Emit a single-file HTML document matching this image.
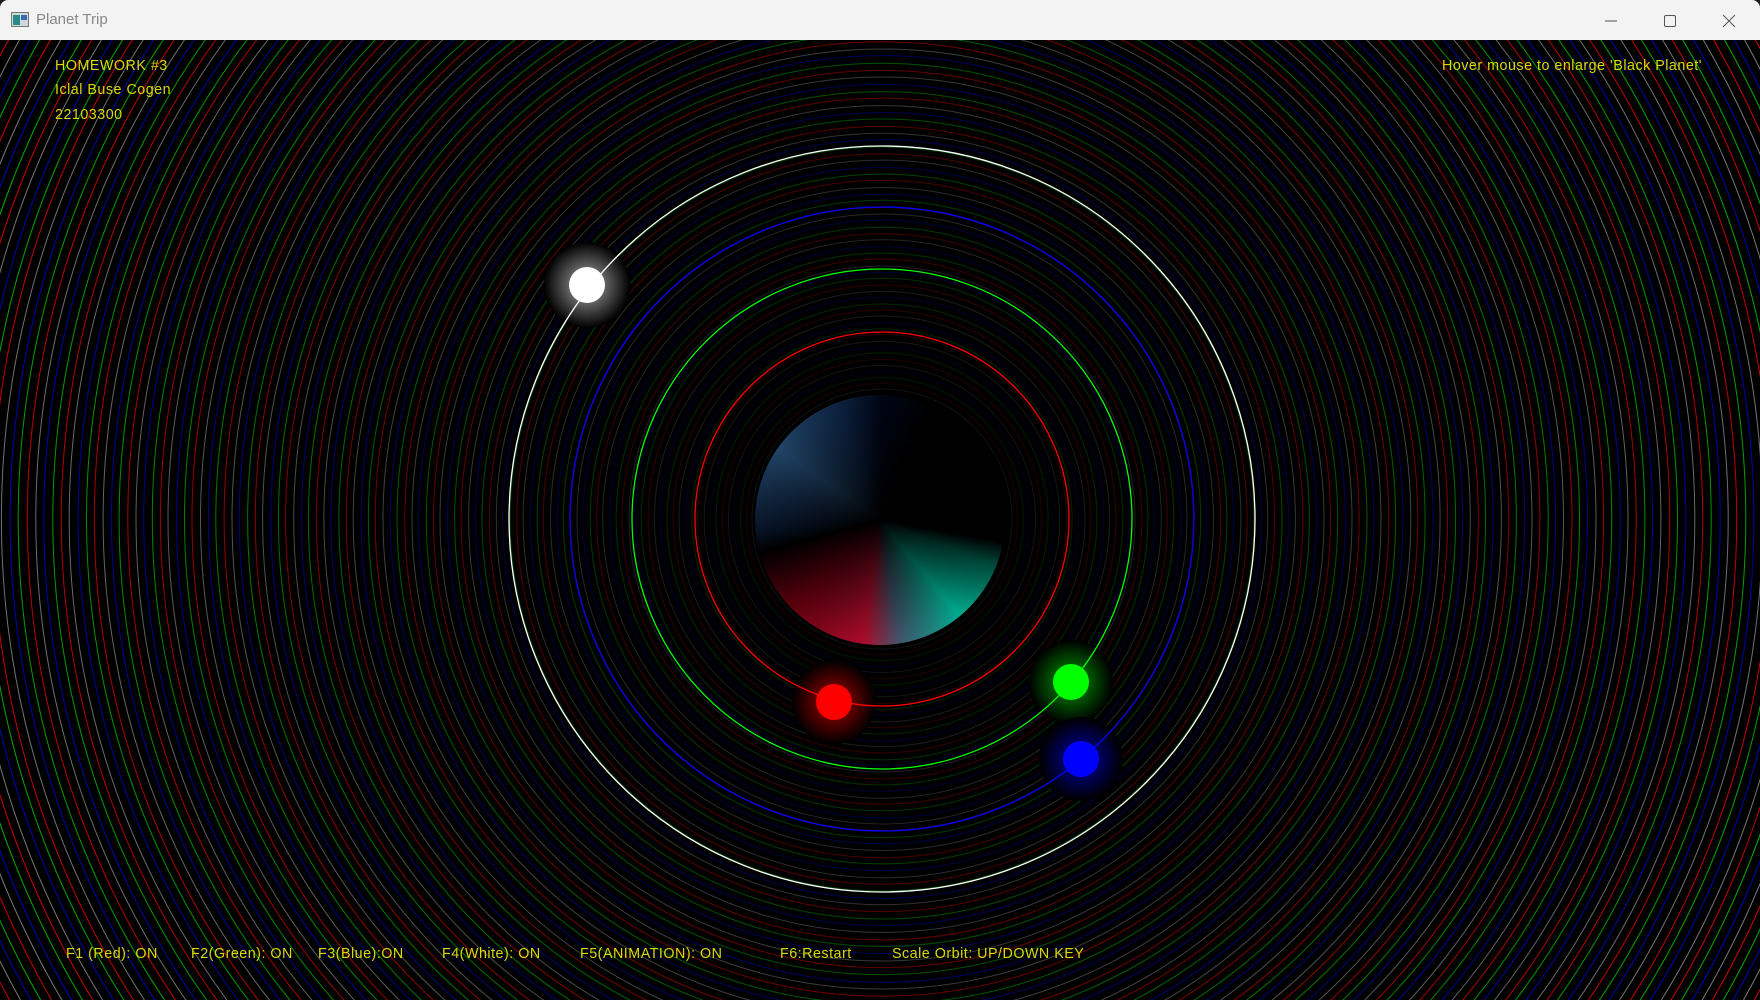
<!DOCTYPE html>
<html><head><meta charset="utf-8"><style>
html,body{margin:0;padding:0;width:1760px;height:1000px;overflow:hidden;background:#1a1a1a;font-family:"Liberation Sans",Arial,sans-serif}
#title{position:absolute;left:0;top:0;width:1760px;height:40px;background:#f3f3f3;border-radius:8px 8px 0 0;overflow:hidden}
#title .t{position:absolute;left:36px;top:11px;font-size:15px;color:#888}
#scene{position:absolute;left:0;top:40px;width:1760px;height:960px;background:#000;overflow:hidden}
svg{display:block}
.y{position:absolute;color:#dada00;font-size:14.3px;letter-spacing:0.5px;white-space:nowrap;line-height:16px}
#planet{position:absolute;left:755px;top:355px;width:250px;height:250px;border-radius:50%;
background:radial-gradient(circle,rgba(0,0,0,1) 0%,rgba(0,0,0,.7) 25%,rgba(0,0,0,0) 100%),
conic-gradient(from 0deg,#000820 0deg,#000 25deg,#000 100deg,#006a55 112deg,#00f0c8 140deg,#5a7a98 170deg,#f0103c 188deg,#800012 225deg,#000 255deg,#0a1a35 265deg,#2d5f90 305deg,#12305a 340deg,#000820 360deg)}
</style></head><body>
<div id="title">
<svg style="position:absolute;left:11px;top:12px" width="18" height="15"><rect x="0.5" y="0.5" width="17" height="14" fill="#cfd8d8" stroke="#777"/><rect x="2" y="3" width="7" height="10" fill="#2a8a8a"/><rect x="10" y="3" width="6" height="5" fill="#3a6ab0"/></svg>
<span class="t">Planet Trip</span>
<svg style="position:absolute;left:1600px;top:12px" width="150" height="18">
<line x1="5" y1="9" x2="17" y2="9" stroke="#555" stroke-width="1"/>
<rect x="64.5" y="3.5" width="11" height="11" rx="1.5" fill="none" stroke="#555"/>
<line x1="123" y1="3" x2="135" y2="15" stroke="#555"/><line x1="135" y1="3" x2="123" y2="15" stroke="#555"/>
</svg>
</div>
<div id="scene">
<svg id="rings" width="1760" height="960" style="position:absolute;left:0;top:0"></svg>
<div id="planet"></div>
<svg width="1760" height="960" style="position:absolute;left:0;top:0">
<defs>
<radialGradient id="gw"><stop offset="0" stop-color="#aaa"/><stop offset="1" stop-color="#000"/></radialGradient>
<radialGradient id="gr"><stop offset="0" stop-color="#a00"/><stop offset="1" stop-color="#000"/></radialGradient>
<radialGradient id="gg"><stop offset="0" stop-color="#090"/><stop offset="1" stop-color="#000"/></radialGradient>
<radialGradient id="gb"><stop offset="0" stop-color="#00a"/><stop offset="1" stop-color="#000"/></radialGradient>
</defs>
<circle cx="587" cy="245" r="43" fill="url(#gw)"/><circle cx="587" cy="245" r="18" fill="#fff"/>
<circle cx="834" cy="662" r="42" fill="url(#gr)"/><circle cx="834" cy="662" r="18" fill="#f00"/>
<circle cx="1071" cy="642" r="42" fill="url(#gg)"/><circle cx="1071" cy="642" r="18" fill="#0f0"/>
<circle cx="1081" cy="719" r="42" fill="url(#gb)"/><circle cx="1081" cy="719" r="18" fill="#00f"/>
<g fill="none" stroke-width="1.3">
<circle cx="882" cy="479" r="187" stroke="#f00"/>
<circle cx="882" cy="479" r="250" stroke="#0f0"/>
<circle cx="882" cy="479" r="312" stroke="#00f"/>
<circle cx="882" cy="479" r="373" stroke="#fff"/>
</g>
</svg>
<div class="y" style="left:55px;top:18px">HOMEWORK #3</div>
<div class="y" style="left:55px;top:42px">Iclal Buse Cogen</div>
<div class="y" style="left:55px;top:67px">22103300</div>
<div class="y" style="left:1442px;top:18px">Hover mouse to enlarge 'Black Planet'</div>
<div class="y" style="left:66px;top:906px">F1 (Red): ON</div>
<div class="y" style="left:191px;top:906px">F2(Green): ON</div>
<div class="y" style="left:318px;top:906px">F3(Blue):ON</div>
<div class="y" style="left:442px;top:906px">F4(White): ON</div>
<div class="y" style="left:580px;top:906px">F5(ANIMATION): ON</div>
<div class="y" style="left:780px;top:906px">F6:Restart</div>
<div class="y" style="left:892px;top:906px">Scale Orbit: UP/DOWN KEY</div>
</div>
<script>
(function(){
var s=document.getElementById('rings'),h='';
var cols=['#7a7a7a','#d00000','#00b000','#0000c0'];
var r=130,i=0;
while(r<1400){
 var o=Math.min(1,0.14+(r-130)/950);
 h+='<circle cx="882" cy="479" r="'+r.toFixed(1)+'" fill="none" stroke="'+cols[i%4]+'" stroke-width="1" opacity="'+o.toFixed(2)+'"/>';
 r+=5.0+r*0.0036+((i*7)%3)*0.5;i++;
}
s.innerHTML=h;
})();
</script>
</body></html>
